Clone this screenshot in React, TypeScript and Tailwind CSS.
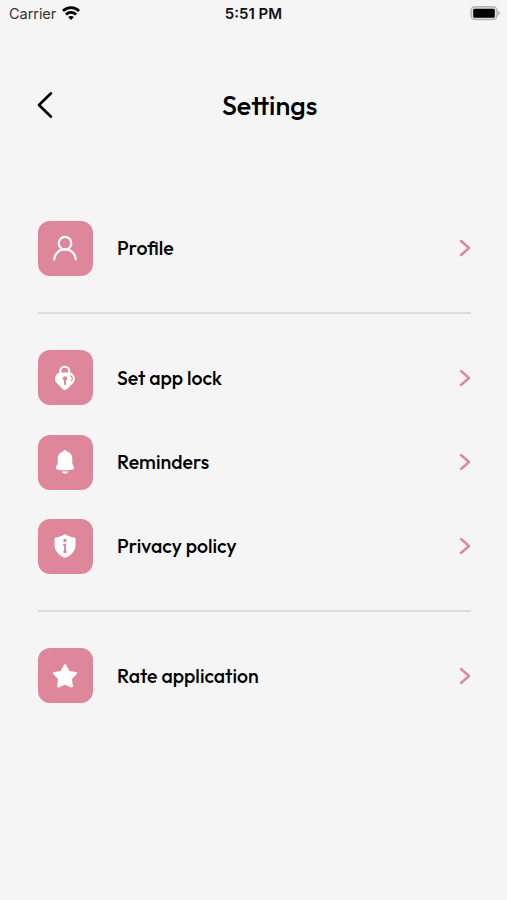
import type { ReactNode } from 'react'

interface SettingsItem {
  label: string
  icon: ReactNode
}

const profileIcon = (
  <svg width="26" height="26" viewBox="0 0 26 26" fill="none" stroke="currentColor" strokeWidth="2.2" strokeLinecap="round">
    <circle cx="13" cy="8.2" r="6.3" />
    <path d="M2.2 24.4C2.800 18.500 7 14.400 13 14.400s10.200 4.100 10.800 10" />
  </svg>
)

const lockIcon = (
  <svg width="26" height="26" viewBox="0 0 26 26" fill="none">
    <path d="M8.3 9.4V6.2a4.5 4.5 0 0 1 9 0v3.2" stroke="currentColor" strokeWidth="2.1" />
    <path
      d="M8 7.6h9.8c4.8 1 6.8 6.9 3.2 10.3l-5.5 5.9a3.500 3.500 0 0 1-5.200 0L4.800 17.900C1.200 14.500 3.200 8.600 8 7.600Z"
      fill="currentColor"
    />
    <circle cx="13" cy="13.5" r="2.2" className="fill-[#df879a]" />
    <path d="M13 14v5.2" className="stroke-[#df879a]" strokeWidth="1.9" strokeLinecap="round" />
    <path d="M18.3 10.7c2.3.9 2.7 3.5 1 5.2" className="stroke-[#df879a]" strokeWidth="1.1" strokeLinecap="round" />
  </svg>
)

const bellIcon = (
  <svg width="26" height="26" viewBox="0 0 26 26" fill="currentColor">
    <path d="M13 1c1 0 1.8.7 2.1 1.6 3.2.9 5.2 3.5 5.2 7v5.2l1.500 2.700c.9 1.700.1 2.900-1.700 3.200-4.400.8-9.800.8-14.200 0-1.800-.3-2.600-1.500-1.700-3.200l1.500-2.700V9.600c0-3.500 2-6.100 5.200-7C11.200 1.700 12 1 13 1Z" />
    <path d="M9.8 22.5h6.4c-.6 1.4-1.7 2.2-3.2 2.2s-2.6-.8-3.2-2.2Z" />
  </svg>
)

const shieldIcon = (
  <svg width="26" height="26" viewBox="0 0 26 26">
    <path
      d="M12.1 1.6a2 2 0 0 1 1.8 0c2.9 1.8 5.5 2.8 8.4 3 .8.1 1.2.6 1.2 1.4v6c0 5.3-3.5 9.5-8.8 12.3a3.5 3.5 0 0 1-3.4 0C6 21.5 2.5 17.3 2.5 12V6c0-.8.4-1.3 1.2-1.4 2.9-.2 5.5-1.2 8.4-3Z"
      fill="currentColor"
    />
    <circle cx="13" cy="7.5" r="1.7" className="fill-[#df879a]" />
    <path d="M11.2 11.7H13v7.200M11.400 18.900h3.400" fill="none" className="stroke-[#df879a]" strokeWidth="2" />
  </svg>
)

const starIcon = (
  <svg width="26" height="26" viewBox="0 0 26 26" fill="currentColor" stroke="currentColor" strokeWidth="2.2" strokeLinejoin="round">
    <path d="m13 2.2 3.7 6.8 7.2 1.2-5.1 5.500 1 7.700-6.800-2.900-6.800 2.900 1-7.700-5.100-5.500L9.300 9Z" />
  </svg>
)

const sections: SettingsItem[][] = [
  [{ label: 'Profile', icon: profileIcon }],
  [
    { label: 'Set app lock', icon: lockIcon },
    { label: 'Reminders', icon: bellIcon },
    { label: 'Privacy policy', icon: shieldIcon },
  ],
  [{ label: 'Rate application', icon: starIcon }],
]

function StatusBar() {
  return (
    <header className="grid h-7 grid-cols-3 items-center pl-[9px] pr-[7px] font-['Inter',sans-serif] text-[#111]">
      <div className="flex items-center gap-[6px]">
        <span className="text-[14.5px] tracking-[-0.05px] text-[#333]">Carrier</span>
        <svg className="-mt-0.5" width="18" height="14" viewBox="0 0 18 14" fill="none" stroke="#000" strokeWidth="2.8">
          <path d="M.9 5c4.600-4.500 11.600-4.500 16.200 0M3.900 8.400c2.900-2.800 7.300-2.800 10.200 0" />
          <path d="M9 14 6.1 11c1.6-1.5 4.2-1.5 5.8 0Z" fill="#000" stroke="none" />
        </svg>
      </div>
      <span className="-ml-0.5 whitespace-nowrap text-center text-[15px] font-semibold">5:51 PM</span>
      <svg className="-mt-0.5 justify-self-end" width="30" height="15" viewBox="0 0 30 15">
        <rect x="1" y=".8" width="26" height="12.8" rx="4" fill="#e0e0e0" stroke="#b4b4b4" strokeWidth="1.5" />
        <rect x="3.2" y="2.7" width="21.6" height="9" rx="1.5" fill="#000" />
        <path d="M28.300 5c2 .8 2 3.700 0 4.500Z" fill="#aaa" />
      </svg>
    </header>
  )
}

function SettingsRow({ label, icon }: SettingsItem) {
  return (
    <li className="flex h-[55px] items-center">
      <div className="flex size-[55px] shrink-0 items-center justify-center rounded-[12px] bg-[#df879a] text-white">
        {icon}
      </div>
      <span className="ml-[24.5px] whitespace-nowrap text-[19.5px] font-medium leading-6">{label}</span>
      <svg className="ml-auto text-[#df879a]" width="12" height="18" viewBox="0 0 12 18" fill="none" stroke="currentColor" strokeWidth="2.4" strokeLinecap="round" strokeLinejoin="round">
        <path d="m2 2 8 7-8 7" />
      </svg>
    </li>
  )
}

export default function App() {
  return (
    <div className="min-h-[900px] bg-[#f5f5f5] font-['Outfit','Lato',sans-serif] text-black">
      <StatusBar />

      <div className="mt-[57px] flex h-10 items-center px-[37px]">
        <svg width="16" height="28" viewBox="0 0 16 28" fill="none" stroke="currentColor" strokeWidth="2.6" strokeLinecap="round" strokeLinejoin="round">
          <path d="M14 2.3 2 14l12 11.7" />
        </svg>
        <h1 className="-mt-px ml-[169px] text-[26.9px] font-medium leading-8">Settings</h1>
      </div>

      <main className="mt-[95.8px] flex flex-col pl-[37.5px] pr-[36.5px]">
        {sections.map((items, i) => (
          <ul
            key={i}
            className={`flex flex-col gap-[29.3px] ${i > 0 ? 'mt-[36.2px] border-t-2 border-[#dcdcdc] pt-[36.3px]' : ''}`}
          >
            {items.map((item) => (
              <SettingsRow key={item.label} {...item} />
            ))}
          </ul>
        ))}
      </main>
    </div>
  )
}
